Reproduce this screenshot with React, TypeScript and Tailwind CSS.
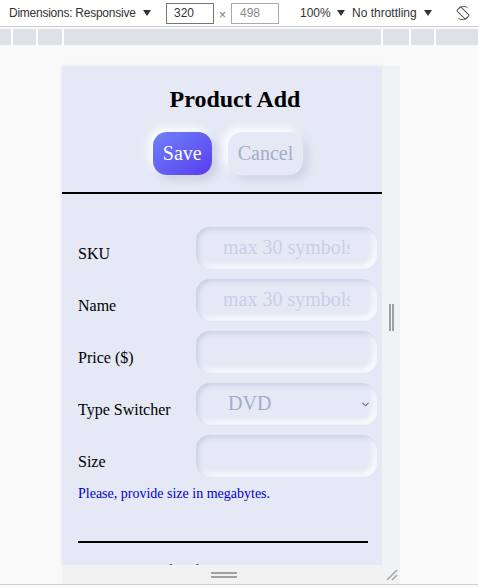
import { ChevronDown } from 'lucide-react'

function Caret({ className = '' }: { className?: string }) {
  return (
    <svg width="8" height="6" viewBox="0 0 8 6" className={className}>
      <path d="M0 0h8L4 6z" fill="#333" />
    </svg>
  )
}

function RotateIcon() {
  return (
    <svg width="16" height="16" viewBox="0 0 16 16" fill="none" stroke="#555" strokeWidth="1">
      <path d="M3.2 4.2A6.5 6.5 0 0 1 12.5 2.6" />
      <path d="M12.8 11.8A6.5 6.5 0 0 1 3.5 13.4" />
      <rect x="5.2" y="1.8" width="5.6" height="12.4" rx="1" transform="rotate(-45 8 8)" />
    </svg>
  )
}

function Toolbar() {
  return (
    <div className="h-[27px] bg-white border-b border-[#cfcfcf] flex items-center text-[12px] text-[#333] font-['Liberation_Sans',sans-serif]">
      <div className="w-[166px] pl-[9px] flex items-center">
        <span className="tracking-[-0.25px]">Dimensions: Responsive</span>
        <Caret className="ml-[7px]" />
      </div>
      <div className="w-[48px] h-[21px] border border-[#767676] flex items-center pl-[7px]">320</div>
      <div className="w-[17px] flex justify-center text-[#777] pt-[3px]">×</div>
      <div className="w-[48px] h-[21px] border border-[#a9a9a9] flex items-center pl-[8px] text-[#8a8a8a]">498</div>
      <div className="w-[73px] pl-[21px] flex items-center">
        <span>100%</span>
        <Caret className="ml-[6px]" />
      </div>
      <div className="w-[103px] flex items-center">
        <span>No throttling</span>
        <Caret className="ml-[7px]" />
      </div>
      <RotateIcon />
    </div>
  )
}

function Ruler() {
  return (
    <div className="mt-[2px] h-[16px] bg-[#dee1e6] flex">
      <div className="w-[11px]" />
      <div className="w-[2px] bg-white" />
      <div className="w-[23px]" />
      <div className="w-[2px] bg-white" />
      <div className="w-[24px]" />
      <div className="w-[2px] bg-white" />
      <div className="w-[317px]" />
      <div className="w-[2px] bg-white" />
      <div className="w-[26px]" />
      <div className="w-[2px] bg-white" />
      <div className="w-[23px]" />
      <div className="w-[2px] bg-white" />
      <div className="flex-1" />
    </div>
  )
}

const inputClass =
  "w-[181px] h-[42px] rounded-[14px] bg-transparent px-[27px] text-[20px] outline-none text-[#7b84a8] placeholder:text-[#c8cfe6] shadow-[inset_2px_2px_5px_#c6cce2,inset_-3px_-3px_6px_#ffffff]"

function Row({ label, children }: { label: string; children: React.ReactNode }) {
  return (
    <div className="flex items-end">
      <label className="w-[118px] text-[16px] text-black pb-[5px]">{label}</label>
      {children}
    </div>
  )
}

function ProductAdd() {
  return (
    <div className="w-[320px] h-[499px] overflow-hidden bg-[#e4e9f5] font-['Liberation_Serif',serif] leading-[1.15] shadow-[0_0_4px_rgba(0,0,0,0.08)]">
      <h2 className="mt-[20px] pl-[26px] text-center text-[24px] font-bold text-black">Product Add</h2>
      <div className="mt-[18px] pl-[12px] flex justify-center gap-[16px]">
        <button className="px-[10px] py-[10px] rounded-[14px] text-[20px] text-white bg-linear-to-br from-[#7080f7] to-[#5a38ef] shadow-[-4px_-4px_10px_#ffffff,4px_4px_10px_#c4cae0]">
          Save
        </button>
        <button className="px-[10px] py-[10px] rounded-[14px] text-[20px] text-[#a3acc9] bg-[#e4e9f5] shadow-[-4px_-4px_10px_#ffffff,4px_4px_10px_#c8cee3]">
          Cancel
        </button>
      </div>
      <div className="mt-[17px] h-[2px] bg-black" />

      <form className="mt-[33px] pl-[16px] flex flex-col gap-[10px]">
        <Row label="SKU">
          <input className={inputClass} placeholder="max 30 symbols" />
        </Row>
        <Row label="Name">
          <input className={inputClass} placeholder="max 30 symbols" />
        </Row>
        <Row label="Price ($)">
          <input className={inputClass} />
        </Row>
        <Row label="Type Switcher">
          <div className="relative">
            <select className="appearance-none w-[181px] h-[42px] rounded-[14px] bg-transparent pl-[32px] text-[20px] text-[#a3acc9] outline-none shadow-[inset_2px_2px_5px_#c6cce2,inset_-3px_-3px_6px_#ffffff]">
              <option>DVD</option>
              <option>Book</option>
              <option>Furniture</option>
            </select>
            <ChevronDown size={11} strokeWidth={2.5} className="absolute right-[6px] top-[16px] text-[#6b7280] pointer-events-none" />
          </div>
        </Row>
        <Row label="Size">
          <input className={inputClass} />
        </Row>
      </form>
      <p className="mt-[9px] pl-[16px] text-[14px] text-[#0000cd]">Please, provide size in megabytes.</p>

      <div className="mt-[39px] ml-[16px] mr-[14px] h-[2px] bg-black" />
      <p className="mt-[19px] text-center text-[16px] text-[#444]">Scandiweb Test assignment</p>
    </div>
  )
}

export default function App() {
  return (
    <div className="w-[478px] h-[587px] bg-[#f9f9f9] overflow-hidden flex flex-col">
      <Toolbar />
      <Ruler />
      <div className="mt-[21px] ml-[62px] flex">
        <ProductAdd />
        <div className="w-[18px] h-[499px] bg-[#f1f2f4] flex items-center justify-center gap-[1px] pt-[4px]">
          <div className="w-[2px] h-[27px] bg-[#a0a0a0]" />
          <div className="w-[2px] h-[27px] bg-[#a0a0a0]" />
        </div>
      </div>
      <div className="ml-[62px] w-[338px] h-[19px] bg-[#f1f2f4] relative flex flex-col items-center pt-[7px] gap-[2px]">
        <div className="ml-[-14px] w-[26px] h-[2px] bg-[#a0a0a0]" />
        <div className="ml-[-14px] w-[26px] h-[2px] bg-[#a0a0a0]" />
        <svg width="12" height="12" viewBox="0 0 12 12" className="absolute right-[2px] top-[4px]" stroke="#a0a0a0" strokeWidth="1.5">
          <path d="M1 11L11 1" />
          <path d="M6 11L11 6" />
        </svg>
      </div>
      <div className="h-[1px] bg-[#cfcfcf]" />
    </div>
  )
}
